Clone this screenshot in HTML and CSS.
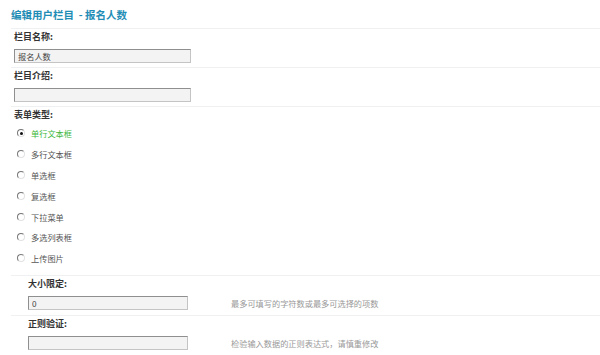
FILE: index.html
```html
<!DOCTYPE html>
<html lang="zh-CN">
<head>
    <meta charset="UTF-8">
    <title>编辑用户栏目</title>
    <link rel="stylesheet" href="styles.css">
</head>
<body>
    <div class="page">
        <h2 class="title">编辑用户栏目 &nbsp;- 报名人数</h2>

        <div class="row">
            <div class="label">栏目名称:</div>
            <input type="text" class="field" value="报名人数">
        </div>

        <div class="row">
            <div class="label">栏目介绍:</div>
            <input type="text" class="field" value="">
        </div>

        <div class="row types">
            <div class="label">表单类型:</div>
            <ul class="options">
                <li class="active"><input type="radio" name="type" class="radio" checked><span>单行文本框</span></li>
                <li><input type="radio" name="type" class="radio"><span>多行文本框</span></li>
                <li><input type="radio" name="type" class="radio"><span>单选框</span></li>
                <li><input type="radio" name="type" class="radio"><span>复选框</span></li>
                <li><input type="radio" name="type" class="radio"><span>下拉菜单</span></li>
                <li><input type="radio" name="type" class="radio"><span>多选列表框</span></li>
                <li><input type="radio" name="type" class="radio"><span>上传图片</span></li>
            </ul>
        </div>

        <div class="row sub">
            <div class="label">大小限定:</div>
            <div class="field-line">
                <input type="text" class="field small" value="0">
                <span class="hint">最多可填写的字符数或最多可选择的项数</span>
            </div>
        </div>

        <div class="row sub">
            <div class="label">正则验证:</div>
            <div class="field-line">
                <input type="text" class="field small" value="">
                <span class="hint">检验输入数据的正则表达式，请慎重修改</span>
            </div>
        </div>
    </div>
</body>
</html>
```

FILE: styles.css
```css
* {
    margin: 0;
    padding: 0;
    box-sizing: border-box;
}

body {
    font-family: "Noto Sans CJK SC", "Liberation Sans", sans-serif;
    font-size: 8px;
    color: #333;
    background: #fff;
}

.page {
    padding-left: 11px;
}

.title {
    font-size: 10.5px;
    font-weight: bold;
    color: #1f8db5;
    line-height: 18px;
    padding-top: 6px;
    padding-bottom: 4px;
    border-bottom: 1px solid #eef0f2;
}

.row {
    padding: 0 0 4px 3px;
    border-bottom: 1px solid #eef0f2;
}

.label {
    font-size: 9px;
    font-weight: bold;
    line-height: 16px;
    margin-bottom: 4px;
    color: #333;
}

.field {
    display: block;
    width: 177px;
    height: 14px;
    padding: 0 3px;
    font-family: inherit;
    font-size: 8.2px;
    line-height: 12px;
    color: #444;
    background: #f3f3f3;
    border: 1px solid #c4c4c4;
    border-top-color: #8f8f8f;
    border-left-color: #8f8f8f;
    outline: none;
}

.types {
    padding-bottom: 6px;
}

.types .label {
    margin-bottom: 0;
}

.options {
    list-style: none;
    padding-left: 2px;
}

.options li {
    display: flex;
    align-items: center;
    height: 20.8px;
    font-size: 8.2px;
    color: #555;
}

.options li.active {
    color: #3cb83c;
}

.radio {
    appearance: none;
    width: 8px;
    height: 8px;
    margin-left: 1px;
    margin-right: 6px;
    border-radius: 50%;
    border: 1px solid #e2e2e2;
    border-top-color: #777;
    border-left-color: #777;
    background: #fff;
    position: relative;
}

.radio:checked::after {
    content: "";
    position: absolute;
    left: 1.5px;
    top: 1.5px;
    width: 3px;
    height: 3px;
    border-radius: 50%;
    background: #111;
}

.sub {
    padding-left: 17px;
    padding-bottom: 5px;
}

.sub:last-child {
    border-bottom: none;
}

.field-line {
    display: flex;
    align-items: center;
}

.field.small {
    width: 160px;
}

.hint {
    margin-left: 43px;
    font-size: 8.2px;
    color: #999;
}
```
